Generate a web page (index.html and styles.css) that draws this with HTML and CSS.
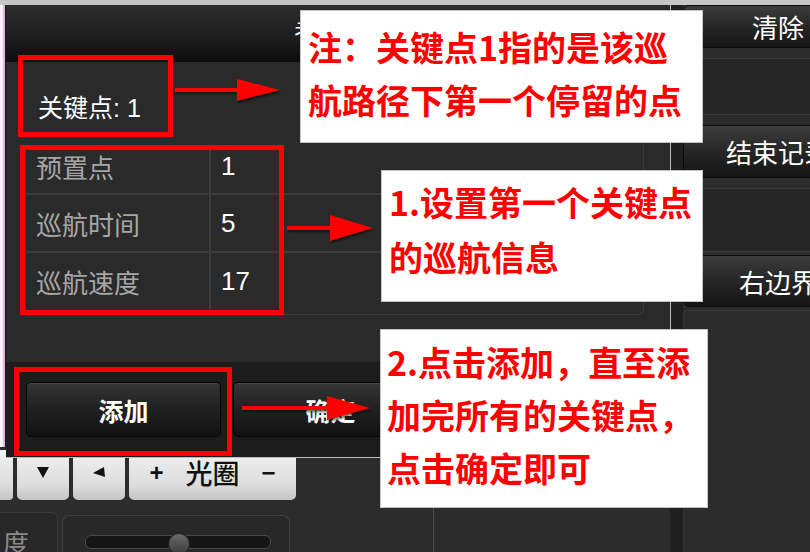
FILE: index.html
```html
<!DOCTYPE html>
<html lang="zh-CN">
<head>
    <meta charset="UTF-8">
    <meta name="viewport" content="width=device-width, initial-scale=1.0">
    <title>巡航关键点设置</title>
    <link rel="stylesheet" href="styles.css">
</head>
<body>
    <div class="screen">
        <div class="topline"></div>
        <div class="app">
            <div class="main">
                <div class="under"></div>
                <div class="deck">
                    <div class="controls">
                        <div class="ptz-row">
                            <div class="ptz-btn edge"></div>
                            <div class="ptz-btn small">
                                <svg width="12" height="11" viewBox="0 0 12 11"><polygon points="0,0 12,0 6,11" fill="#111"/></svg>
                            </div>
                            <div class="ptz-btn small">
                                <svg width="12" height="11" viewBox="0 0 12 11"><polygon points="11,0 0,6 12,10" fill="#111"/></svg>
                            </div>
                            <div class="ptz-btn wide"><span class="sign">+</span><span>光圈</span><span class="sign">&minus;</span></div>
                        </div>
                        <div class="lower">
                            <div class="lower-label">度</div>
                            <div class="slider-box">
                                <div class="track"></div>
                                <div class="knob"></div>
                            </div>
                        </div>
                    </div>
                    <div class="deck-rest"></div>
                </div>
            </div>
            <div class="gutter"></div>
            <div class="side">
                <button class="side-btn first">清除</button>
                <div class="well"></div>
                <button class="side-btn second">结束记录</button>
                <div class="well tall"></div>
                <button class="side-btn third">右边界</button>
                <div class="well last"></div>
            </div>
        </div>

        <!-- cruise key point dialog -->
        <div class="dialog">
            <div class="dlg-title">考</div>
            <div class="dlg-body">
                <div class="key">关键点: 1</div>
                <div class="props">
                    <div class="prop first"><span class="name">预置点</span><span class="val">1</span></div>
                    <div class="prop"><span class="name">巡航时间</span><span class="val">5</span></div>
                    <div class="prop last"><span class="name">巡航速度</span><span class="val">17</span></div>
                </div>
            </div>
            <div class="dlg-foot">
                <button class="dlg-btn">添加</button>
                <button class="dlg-btn">确定</button>
            </div>
        </div>

        <!-- annotations -->
        <div class="mark mark-key"></div>
        <div class="mark mark-props"></div>
        <div class="mark mark-add"></div>

        <svg class="arrow arrow-1" width="106" height="24" viewBox="0 0 106 24">
            <rect x="0" y="10" width="64" height="4" fill="#f00"/>
            <polygon points="62,1 105,12 62,23" fill="#f00"/>
        </svg>
        <svg class="arrow arrow-2" width="87" height="26" viewBox="0 0 87 26">
            <rect x="0" y="11" width="45" height="4" fill="#f00"/>
            <polygon points="43,0 86,13 43,26" fill="#f00"/>
        </svg>
        <svg class="arrow arrow-3" width="129" height="24" viewBox="0 0 129 24">
            <rect x="0" y="10" width="87" height="4" fill="#f00"/>
            <polygon points="85,0 128,12 85,24" fill="#f00"/>
        </svg>

        <div class="note note-1">注<span class="punct">：</span>关键点1指的是该巡<br>航路径下第一个停留的点</div>
        <div class="note note-2">1.设置第一个关键点<br>的巡航信息</div>
        <div class="note note-3">2.点击添加<span class="punct">，</span>直至添<br>加完所有的关键点<span class="punct">，</span><br>点击确定即可</div>
    </div>
</body>
</html>
```

FILE: styles.css
```css
* {
    margin: 0;
    padding: 0;
    box-sizing: border-box;
}

body {
    font-family: "Liberation Sans", "Noto Sans CJK SC", sans-serif;
    background-color: #2c2c2c;
}

.screen {
    position: relative;
    width: 810px;
    height: 552px;
    overflow: hidden;
    background-color: #2c2c2c;
}

.topline {
    height: 5px;
    background-color: #c6c6c6;
}

.app {
    display: flex;
    height: 547px;
}

.main {
    width: 670px;
    flex-shrink: 0;
    display: flex;
    flex-direction: column;
}

.under {
    height: 452px;
    background: linear-gradient(90deg, #f6f6f6 0 3px, #e6aee8 3px 5px, #1a1a1a 5px);
}

.deck {
    flex: 1;
    display: flex;
}

.controls {
    width: 433px;
    flex-shrink: 0;
    padding-top: 3px;
}

.deck-rest {
    flex: 1;
    border-left: 1px solid #4c4c4c;
}

.ptz-row {
    display: flex;
    gap: 4px;
    height: 50px;
}

.ptz-btn {
    display: flex;
    align-items: center;
    justify-content: center;
    padding-bottom: 5px;
    background: linear-gradient(#f2f2f2, #dcdcdc 70%, #c4c4c4);
    border-radius: 0 0 5px 5px;
    color: #111;
    font-size: 14px;
}

.ptz-btn.edge {
    width: 13px;
    border-radius: 0 0 4px 0;
}

.ptz-btn.small {
    width: 52px;
}

.ptz-btn.wide {
    width: 167px;
    gap: 22px;
    font-family: "Noto Sans CJK SC", sans-serif;
    font-size: 27px;
    font-weight: 500;
}

.ptz-btn .sign {
    font-family: "Liberation Sans", sans-serif;
    font-size: 24px;
    font-weight: bold;
}

.lower {
    display: flex;
    gap: 4px;
    margin-top: 12px;
    height: 40px;
}

.lower-label {
    width: 58px;
    padding: 14px 0 0 3px;
    background-color: #272727;
    border-top: 1px solid #3a3a3a;
    border-right: 1px solid #3a3a3a;
    border-radius: 0 6px 0 0;
    color: #8a8a8a;
    font-family: "Noto Sans CJK SC", sans-serif;
    font-size: 26px;
    line-height: 30px;
    overflow: hidden;
}

.slider-box {
    position: relative;
    width: 228px;
    margin-top: 3px;
    background-color: #282828;
    border: 1px solid #404040;
    border-bottom: none;
    border-radius: 8px 8px 0 0;
}

.track {
    position: absolute;
    left: 22px;
    top: 19px;
    width: 186px;
    height: 14px;
    background-color: #161616;
    border: 1px solid #4a4a4a;
    border-radius: 6px;
}

.knob {
    position: absolute;
    left: 105px;
    top: 17px;
    width: 22px;
    height: 22px;
    border-radius: 50%;
    background: linear-gradient(#6a6a6a, #3a3a3a);
    border: 1px solid #222;
}

.gutter {
    width: 13px;
    flex-shrink: 0;
    background-color: #1f1f1f;
}

.side {
    width: 190px;
    flex-shrink: 0;
    display: flex;
    flex-direction: column;
}

.side-btn {
    background: linear-gradient(#3c3c3c, #262626 50%, #151515);
    border: 1px solid #0c0c0c;
    border-radius: 6px;
    color: #fff;
    font-family: "Noto Sans CJK SC", sans-serif;
    font-size: 26px;
}

.side-btn.first {
    height: 43px;
}

.side-btn.second {
    height: 53px;
}

.side-btn.third {
    height: 52px;
}

.well {
    height: 57px;
    margin: 10px 0;
    background-color: #262626;
    border-top: 1px solid #3c3c3c;
    border-bottom: 1px solid #3c3c3c;
    border-left: 1px solid #333;
    border-radius: 4px 0 0 4px;
}

.well.tall {
    height: 64px;
    margin-bottom: 3px;
}

.well.last {
    flex: 1;
    margin: 3px 0 0;
    border-bottom: none;
    background-color: #2c2c2c;
}

/* dialog */
.dialog {
    position: absolute;
    left: 6px;
    top: 5px;
    width: 665px;
    height: 453px;
    background-color: #2a2a2a;
    border-right: 1px solid #bcbcbc;
    border-bottom: 1px solid #bcbcbc;
    color: #fff;
}

.dlg-title {
    height: 57px;
    padding-left: 288px;
    background: linear-gradient(#2d2d2d, #1c1c1c 60%, #0d0d0d);
    font-family: "Noto Sans CJK SC", sans-serif;
    font-size: 24px;
    line-height: 50px;
    overflow: hidden;
}

.dlg-body {
    height: 300px;
    padding-right: 26px;
}

.key {
    height: 83px;
    padding: 32px 0 0 32px;
    font-size: 25px;
    line-height: 28px;
}

.props {
    margin-left: 19px;
    height: 170px;
    border: 1px solid #3a3a3a;
    border-top: none;
    border-radius: 0 0 6px 6px;
    overflow: hidden;
}

.prop {
    display: grid;
    grid-template-columns: 185px 1fr;
    height: 58px;
    border-bottom: 2px solid #3c3c3c;
    font-size: 26px;
}

.prop.first {
    height: 50px;
}

.prop.last {
    height: 57px;
    border-bottom: none;
}

.prop span {
    display: flex;
    align-items: center;
    padding-left: 10px;
}

.prop.first span {
    padding-bottom: 6px;
}

.prop .name {
    border-right: 2px solid #3c3c3c;
    color: #a6a6a6;
}

.prop .val {
    color: #fff;
}

.dlg-foot {
    display: flex;
    gap: 12px;
    height: 95px;
    padding: 20px 0 0 20px;
    background-color: #1c1c1c;
}

.dlg-btn {
    width: 195px;
    height: 55px;
    flex-shrink: 0;
    background: linear-gradient(#353535, #202020 50%, #121212);
    border: 1px solid #050505;
    border-radius: 5px;
    box-shadow: inset 0 1px 0 #474747;
    color: #fff;
    font-family: "Noto Sans CJK SC", sans-serif;
    font-size: 25px;
    font-weight: bold;
}

/* annotations */
.mark {
    position: absolute;
    border: 5px solid #f00;
}

.mark-key {
    left: 18px;
    top: 55px;
    width: 155px;
    height: 82px;
}

.mark-props {
    left: 20px;
    top: 145px;
    width: 264px;
    height: 170px;
}

.mark-add {
    left: 14px;
    top: 367px;
    width: 218px;
    height: 89px;
}

.arrow {
    position: absolute;
    filter: drop-shadow(1px 2px 1px rgba(0, 0, 0, 0.55));
}

.arrow-1 {
    left: 175px;
    top: 78px;
}

.arrow-2 {
    left: 287px;
    top: 215px;
}

.arrow-3 {
    left: 242px;
    top: 396px;
}

.note {
    position: absolute;
    background-color: #fff;
    border: 1px solid #c4c4c4;
    color: #f00;
    font-family: "Noto Sans CJK SC", sans-serif;
    font-size: 34px;
    font-weight: bold;
    white-space: nowrap;
}

.note .punct {
    font-family: "Noto Sans CJK TC", sans-serif;
}

.note-1 {
    left: 300px;
    top: 10px;
    width: 403px;
    height: 133px;
    padding: 9px 0 0 7px;
    line-height: 53px;
}

.note-2 {
    left: 381px;
    top: 170px;
    width: 322px;
    height: 132px;
    padding: 3px 0 0 7px;
    line-height: 55px;
}

.note-3 {
    left: 380px;
    top: 329px;
    width: 328px;
    height: 179px;
    padding: 5px 0 0 6px;
    line-height: 53px;
}
```
